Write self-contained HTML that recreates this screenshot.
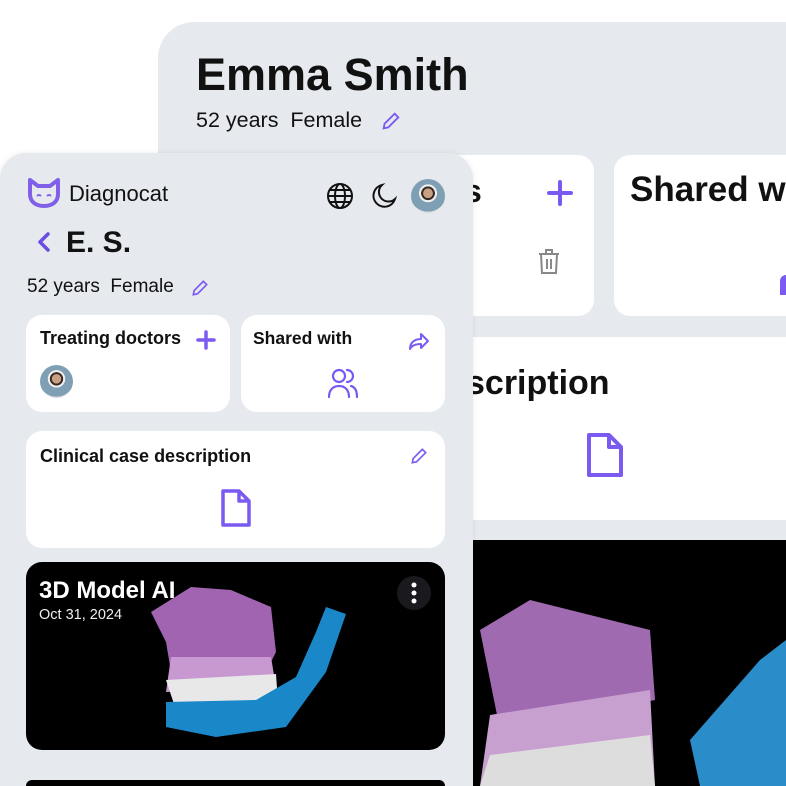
<!DOCTYPE html>
<html><head><meta charset="utf-8"><style>
*{box-sizing:border-box;margin:0;padding:0}
html,body{width:786px;height:786px;overflow:hidden}
body{background:#fff;font-family:"Liberation Sans",sans-serif;position:relative;color:#111}
.back{position:absolute;left:158px;top:22px;width:628px;height:764px;background:#e6e9ee;border-radius:36px 0 0 0}
.card{position:absolute;background:#fff;border-radius:16px;overflow:hidden}
.front{position:absolute;left:0;top:153px;width:473px;height:633px;background:#e6e9ed;border-radius:26px 26px 0 0;box-shadow:0 0 6px rgba(0,0,0,.08)}
.b{font-weight:bold}
.av{position:absolute;border-radius:50%;background:radial-gradient(circle at 50% 42%,#c9a084 0 18%,#3a2c25 19% 26%,#f0f0f0 27% 34%,#7fa0b4 35% 70%,#d8dde0 71%);}
</style></head><body>
<div class="back">
  <div style="position:absolute;left:38px;top:27px;font-size:45px;font-weight:bold">Emma Smith</div>
  <div style="position:absolute;left:38px;top:86px;font-size:21.5px">52 years&nbsp; Female</div>
  <svg style="position:absolute;left:222px;top:88px" width="22" height="22" viewBox="0 0 24 24" fill="none" stroke="#7a5af0" stroke-width="2"><path d="M4 20l1-5L16 4l4 4L9 19z"/></svg>
</div>
<div class="card" style="left:440px;top:155px;width:154px;height:161px">
  <div class="b" style="position:absolute;left:24px;top:18px;font-size:32px">s</div>
  <svg style="position:absolute;left:106px;top:24px" width="28" height="28" viewBox="0 0 28 28" stroke="#7a5af0" stroke-width="4" stroke-linecap="round"><path d="M14 3v22M3 14h22"/></svg>
  <svg style="position:absolute;left:97px;top:92px" width="24" height="28" viewBox="0 0 24 28" fill="none" stroke="#888" stroke-width="2"><path d="M2 7h20M9 7V3h6v4M4 7l1 19h14l1-19M10 12v10M14 12v10"/></svg>
</div>
<div class="card" style="left:614px;top:155px;width:172px;height:161px;border-radius:16px 0 0 16px">
  <div class="b" style="position:absolute;left:16px;top:15px;font-size:35px;white-space:nowrap">Shared with</div>
  <div style="position:absolute;left:166px;top:120px;width:6px;height:20px;border-radius:10px 0 0 0;background:#7a5af0"></div>
</div>
<div class="card" style="left:440px;top:337px;width:346px;height:183px;border-radius:16px 0 0 16px">
  <div class="b" style="position:absolute;left:26px;top:27px;font-size:34px">scription</div>
  <svg style="position:absolute;left:146px;top:95px" width="38" height="46" viewBox="0 0 38 46" fill="none" stroke="#7a5af0" stroke-width="4" stroke-linejoin="round"><path d="M3 3h20l12 12v28H3z M23 3v12h12"/></svg>
</div>
<div style="position:absolute;left:440px;top:540px;width:346px;height:246px;background:#000;overflow:hidden">
  <svg width="346" height="246" viewBox="0 0 346 246"><path d="M40 90 L90 60 L150 75 L210 90 L215 160 L60 190 Z" fill="#a06ab0"/><path d="M50 175 L210 150 L215 246 L40 246Z" fill="#c8a0d0"/><path d="M50 215 L210 195 L215 246 L40 246Z" fill="#ddd"/><path d="M250 200 L320 120 L346 100 L346 246 L260 246Z" fill="#2a8cc8"/></svg>
</div>

<div class="front">
  <svg style="position:absolute;left:26px;top:24px" width="36" height="32" viewBox="0 0 36 32" fill="none" stroke="#8060e8" stroke-width="4" stroke-linejoin="round"><path d="M4 3l8 6h12l8-6v14c0 8-6 12-14 12S4 25 4 17z"/><path d="M11 19q2-2 4 0M21 19q2-2 4 0" stroke-width="2"/></svg>
  <div style="position:absolute;left:69px;top:28px;font-size:22px;font-weight:500">Diagnocat</div>
  <svg style="position:absolute;left:326px;top:29px" width="28" height="28" viewBox="0 0 28 28" fill="none" stroke="#111" stroke-width="2"><circle cx="14" cy="14" r="12"/><ellipse cx="14" cy="14" rx="5" ry="12"/><path d="M2 14h24M4 8h20M4 20h20"/></svg>
  <svg style="position:absolute;left:370px;top:29px" width="28" height="28" viewBox="0 0 28 28" fill="none" stroke="#111" stroke-width="2"><path d="M12 3a11 11 0 1 0 13 14A9 9 0 0 1 12 3z"/></svg>
  <div class="av" style="left:411px;top:26px;width:34px;height:34px"></div>
  <svg style="position:absolute;left:36px;top:78px" width="16" height="22" viewBox="0 0 16 22" fill="none" stroke="#6a4ce0" stroke-width="3.5" stroke-linecap="round" stroke-linejoin="round"><path d="M12 3L4 11l8 8"/></svg>
  <div class="b" style="position:absolute;left:66px;top:73px;font-size:30px">E. S.</div>
  <div style="position:absolute;left:27px;top:123px;font-size:19px">52 years&nbsp; Female</div>
  <svg style="position:absolute;left:190px;top:125px" width="20" height="20" viewBox="0 0 24 24" fill="none" stroke="#7a5af0" stroke-width="2"><path d="M4 20l1-5L16 4l4 4L9 19z"/></svg>

  <div class="card" style="left:26px;top:162px;width:204px;height:97px">
    <div class="b" style="position:absolute;left:14px;top:13px;font-size:18px">Treating doctors</div>
    <svg style="position:absolute;left:170px;top:15px" width="20" height="20" viewBox="0 0 20 20" stroke="#7a5af0" stroke-width="3.5" stroke-linecap="round"><path d="M10 2v16M2 10h16"/></svg>
    <div class="av" style="left:14px;top:50px;width:33px;height:33px"></div>
  </div>
  <div class="card" style="left:241px;top:162px;width:204px;height:97px">
    <div class="b" style="position:absolute;left:12px;top:13px;font-size:17.5px">Shared with</div>
    <svg style="position:absolute;left:167px;top:17px" width="22" height="20" viewBox="0 0 22 20" fill="none" stroke="#7a5af0" stroke-width="2" stroke-linejoin="round"><path d="M13 2l7 7-7 7v-4c-5 0-9 1-11 5 0-6 4-10 11-10z"/></svg>
    <svg style="position:absolute;left:87px;top:52px" width="30" height="32" viewBox="0 0 30 32" fill="none" stroke="#7a5af0" stroke-width="2.2" stroke-linecap="round"><circle cx="11" cy="9" r="6"/><path d="M1 30c0-7 4-11 10-11s10 4 10 11"/><path d="M19 3a6 6 0 0 1 0 12M23 19c4 1 6 5 6 11"/></svg>
  </div>
  <div class="card" style="left:26px;top:278px;width:419px;height:117px">
    <div class="b" style="position:absolute;left:14px;top:15px;font-size:18px">Clinical case description</div>
    <svg style="position:absolute;left:383px;top:15px" width="20" height="20" viewBox="0 0 24 24" fill="none" stroke="#7a5af0" stroke-width="2"><path d="M4 20l1-5L16 4l4 4L9 19z"/></svg>
    <svg style="position:absolute;left:194px;top:57px" width="32" height="40" viewBox="0 0 32 40" fill="none" stroke="#7a5af0" stroke-width="3.5" stroke-linejoin="round"><path d="M3 3h16l10 10v24H3z M19 3v10h10"/></svg>
  </div>
  <div style="position:absolute;left:26px;top:409px;width:419px;height:188px;background:#000;border-radius:16px;overflow:hidden">
    <svg style="position:absolute;left:0;top:0" width="419" height="188" viewBox="0 0 419 188"><path d="M125 50 L165 25 L205 28 L245 45 L250 90 L240 110 L145 110 L140 80Z" fill="#a064b0"/><path d="M145 95 L245 95 L250 125 L140 130Z" fill="#c898d0"/><path d="M140 118 L250 112 L252 140 L150 148Z" fill="#e8e8e8"/><path d="M140 140 L230 138 L270 115 L290 70 L300 45 L320 52 L300 110 L260 165 L190 175 L140 165Z" fill="#1a88c8"/></svg>
    <div class="b" style="position:absolute;left:13px;top:15px;font-size:24px;color:#fff">3D Model AI</div>
    <div style="position:absolute;left:13px;top:45px;font-size:14.5px;color:#eee">Oct 31, 2024</div>
    <div style="position:absolute;left:371px;top:14px;width:34px;height:34px;border-radius:50%;background:#1a1a1e"></div>
    <svg style="position:absolute;left:385px;top:20px" width="6" height="22" viewBox="0 0 6 22" fill="#fff"><circle cx="3" cy="3" r="2.5"/><circle cx="3" cy="11" r="2.5"/><circle cx="3" cy="19" r="2.5"/></svg>
  </div>
  <div style="position:absolute;left:26px;top:627px;width:419px;height:6px;background:#000;border-radius:12px 12px 0 0"></div>
</div>
</body></html>
